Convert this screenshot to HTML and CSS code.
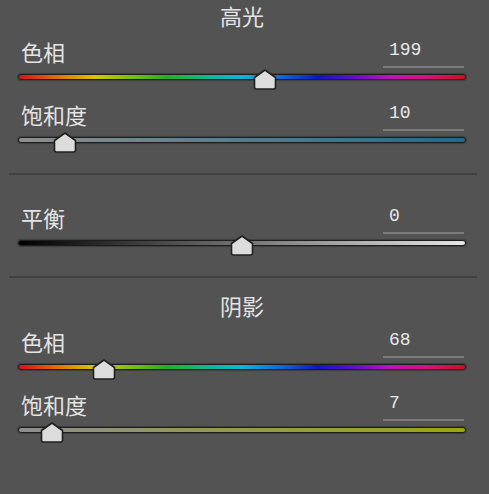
FILE: index.html
```html
<!DOCTYPE html>
<html lang="zh-CN">
<head>
<meta charset="utf-8">
<title>分离色调</title>
<link rel="stylesheet" href="styles.css">
</head>
<body>
<div class="panel">
  <section class="group">
    <div class="group-title">高光</div>
    <div class="row">
      <div class="row-head"><span class="label">色相</span><span class="value">199</span></div>
      <div class="slider">
        <div class="track track-hue"></div>
        <div class="lane"><div class="thumb" style="left: 55.28%"><svg viewBox="0 0 24 21" width="24" height="21"><path d="M12 1 L22.5 8.5 L22.5 18 Q22.5 20 20.5 20 L3.5 20 Q1.5 20 1.5 18 L1.5 8.5 Z"/></svg></div></div>
      </div>
    </div>
    <div class="row">
      <div class="row-head"><span class="label">饱和度</span><span class="value">10</span></div>
      <div class="slider">
        <div class="track track-sat-hi"></div>
        <div class="lane"><div class="thumb" style="left: 10%"><svg viewBox="0 0 24 21" width="24" height="21"><path d="M12 1 L22.5 8.5 L22.5 18 Q22.5 20 20.5 20 L3.5 20 Q1.5 20 1.5 18 L1.5 8.5 Z"/></svg></div></div>
      </div>
    </div>
  </section>

  <div class="divider divider-top"></div>

  <section class="group">
    <div class="row">
      <div class="row-head"><span class="label">平衡</span><span class="value">0</span></div>
      <div class="slider">
        <div class="track track-balance"></div>
        <div class="lane"><div class="thumb" style="left: 50%"><svg viewBox="0 0 24 21" width="24" height="21"><path d="M12 1 L22.5 8.5 L22.5 18 Q22.5 20 20.5 20 L3.5 20 Q1.5 20 1.5 18 L1.5 8.5 Z"/></svg></div></div>
      </div>
    </div>
  </section>

  <div class="divider divider-bottom"></div>

  <section class="group">
    <div class="group-title">阴影</div>
    <div class="row">
      <div class="row-head"><span class="label">色相</span><span class="value">68</span></div>
      <div class="slider">
        <div class="track track-hue"></div>
        <div class="lane"><div class="thumb" style="left: 18.89%"><svg viewBox="0 0 24 21" width="24" height="21"><path d="M12 1 L22.5 8.5 L22.5 18 Q22.5 20 20.5 20 L3.5 20 Q1.5 20 1.5 18 L1.5 8.5 Z"/></svg></div></div>
      </div>
    </div>
    <div class="row">
      <div class="row-head"><span class="label">饱和度</span><span class="value">7</span></div>
      <div class="slider">
        <div class="track track-sat-sh"></div>
        <div class="lane"><div class="thumb" style="left: 7%"><svg viewBox="0 0 24 21" width="24" height="21"><path d="M12 1 L22.5 8.5 L22.5 18 Q22.5 20 20.5 20 L3.5 20 Q1.5 20 1.5 18 L1.5 8.5 Z"/></svg></div></div>
      </div>
    </div>
  </section>
</div>
</body>
</html>
```

FILE: styles.css
```css
* { box-sizing: border-box; }

html, body {
  margin: 0;
  padding: 0;
  background: #535353;
}

body {
  width: 489px;
  height: 494px;
  overflow: hidden;
  font-family: "Noto Sans CJK SC", "Noto Sans", sans-serif;
  color: #e4e4e4;
}

.panel {
  padding: 0 23px 0 18px;
}

.group-title {
  height: 30px;
  line-height: 30px;
  font-size: 22px;
  text-align: center;
}

.row {
  height: 63px;
  display: flex;
  flex-direction: column;
}

.row-head {
  height: 38px;
  padding-top: 9px;
  display: flex;
  justify-content: space-between;
  align-items: stretch;
}

.label {
  padding-left: 3px;
  font-size: 22px;
  line-height: 24px;
}

.value {
  width: 81px;
  margin-right: 2px;
  padding: 1px 0 0 6px;
  border-bottom: 2px solid #7b7b7b;
  font-family: "Liberation Mono", "DejaVu Sans Mono", monospace;
  font-size: 18px;
  line-height: 20px;
  color: #e8e8e8;
}

.slider {
  position: relative;
  height: 25px;
  padding-top: 6px;
}

.track {
  height: 6px;
  border: 1px solid #1d1d1d;
  border-radius: 3px;
  box-shadow: 0 0 1px 1px rgba(0, 0, 0, 0.25);
}

.track-hue {
  background: linear-gradient(to right,
    #d8101c 0%, #e06a0a 8%, #d8c800 17%, #7cc010 25%, #22b020 33%,
    #10b890 42%, #10b4d8 50%, #1070d8 58%, #1018c0 67%, #6010c8 75%,
    #c010c0 83%, #d81080 91%, #d01020 100%);
}

.track-sat-hi {
  background: linear-gradient(to right, #8e8e8e, #1c6c8c);
}

.track-sat-sh {
  background: linear-gradient(to right, #8e8e8e, #9ca60c);
}

.track-balance {
  background: linear-gradient(to right, #000000, #e6e6e6);
}

.lane {
  position: absolute;
  top: 1px;
  left: 3px;
  right: 3px;
  height: 21px;
}

.thumb {
  position: absolute;
  top: 0;
  width: 24px;
  height: 21px;
  transform: translateX(-50%);
}

.thumb svg {
  display: block;
}

.thumb path {
  fill: #dcdcdc;
  stroke: #202020;
  stroke-width: 1.6;
  stroke-linejoin: round;
}

.divider {
  height: 2px;
  margin-left: -9px;
  margin-right: -11px;
  background: #414141;
}

.divider-top {
  margin-top: 17px;
  margin-bottom: 21px;
}

.divider-bottom {
  margin-top: 17px;
  margin-bottom: 12px;
}
```
